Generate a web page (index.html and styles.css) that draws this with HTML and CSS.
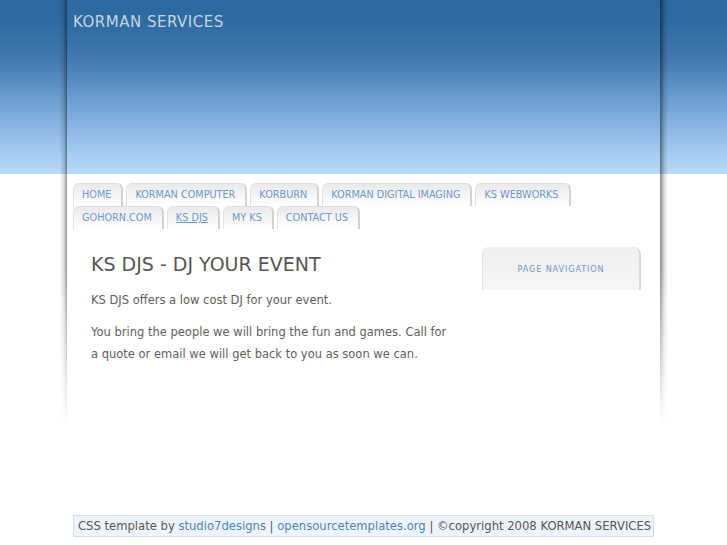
FILE: index.html
```html
<!DOCTYPE html>
<html lang="en">
<head>
<meta charset="utf-8">
<title>KORMAN SERVICES</title>
<link rel="stylesheet" href="styles.css">
</head>
<body>
<div class="page">
  <header class="masthead">
    <h1 class="site-title">KORMAN SERVICES</h1>
  </header>
  <ul class="tabs">
    <li><a href="#">HOME</a></li>
    <li><a href="#">KORMAN COMPUTER</a></li>
    <li><a href="#">KORBURN</a></li>
    <li><a href="#">KORMAN DIGITAL IMAGING</a></li>
    <li><a href="#">KS WEBWORKS</a></li>
    <li><a href="#">GOHORN.COM</a></li>
    <li><a href="#" class="current">KS DJS</a></li>
    <li><a href="#">MY KS</a></li>
    <li><a href="#">CONTACT US</a></li>
  </ul>
  <div class="body">
    <main class="content">
      <h2 class="headline">KS DJS - DJ YOUR EVENT</h2>
      <p>KS DJS offers a low cost DJ for your event.</p>
      <p>You bring the people we will bring the fun and games. Call for a quote or email we will get back to you as soon we can.</p>
    </main>
    <aside class="sidebar">
      <div class="side-head">PAGE NAVIGATION</div>
    </aside>
  </div>
</div>
<footer class="footer">CSS template by <a href="#">studio7designs</a> | <a href="#">opensourcetemplates.org</a> | ©copyright 2008 KORMAN SERVICES</footer>
</body>
</html>
```

FILE: styles.css
```css
html, body {
  margin: 0;
  padding: 0;
}
body {
  font-family: "DejaVu Sans", Verdana, sans-serif;
  color: #555;
  background: #fff linear-gradient(to bottom, #2c69a0 0px, #2e6ba2 22px, #4279b0 60px, #6d9fd2 100px, #97c1ea 140px, #b9dbfa 174px) no-repeat top left / 100% 174px;
}
.page {
  position: relative;
  width: 593px;
  margin: 0 auto;
  min-height: 425px;
}
.page::before,
.page::after {
  content: "";
  position: absolute;
  top: 0;
  bottom: 0;
  width: 8px;
  -webkit-mask-image: linear-gradient(to bottom, #000 0, #000 270px, transparent 425px);
  mask-image: linear-gradient(to bottom, #000 0, #000 270px, transparent 425px);
}
.page::before {
  left: -8px;
  background: linear-gradient(to left, rgba(0,0,0,0.45) 0, rgba(0,0,0,0.32) 1px, rgba(0,0,0,0.14) 3px, rgba(0,0,0,0.04) 6px, transparent 8px);
}
.page::after {
  right: -8px;
  background: linear-gradient(to right, rgba(0,0,0,0.45) 0, rgba(0,0,0,0.32) 2px, rgba(0,0,0,0.14) 4px, rgba(0,0,0,0.04) 7px, transparent 8px);
}
.masthead {
  height: 174px;
  box-sizing: border-box;
  padding: 13px 6px 0;
}
.site-title {
  margin: 0;
  font-weight: normal;
  font-size: 15px;
  line-height: 18px;
  letter-spacing: 0.5px;
  color: #c6d4e1;
}
.tabs {
  list-style: none;
  margin: 0;
  padding: 9px 6px 0;
  display: flex;
  flex-wrap: wrap;
  column-gap: 3px;
}
.tabs a {
  display: block;
  height: 22px;
  line-height: 22px;
  padding: 0 10px 0 8px;
  font-size: 9.7px;
  color: #6d97c6;
  text-decoration: none;
  background: linear-gradient(to bottom, #e9e9e9 0, #f4f4f4 45%, #fbfbfb 80%, #fff 100%);
  border-top: 1px solid #dedede;
  border-left: 1px solid #e2e2e2;
  border-right: 2px solid #d2d2d2;
  border-radius: 6px 6px 0 0;
}
.tabs a.current {
  text-decoration: underline;
}
.body {
  display: flex;
  padding: 18px 19px 0 24px;
  column-gap: 24px;
}
.content {
  width: 364px;
}
.headline {
  margin: 6px 0 14px;
  font-weight: normal;
  font-size: 19px;
  line-height: 23px;
  color: #555;
}
.content p {
  margin: 0 0 10.5px;
  font-size: 11.5px;
  line-height: 21.5px;
  color: #5e5e5e;
}
.sidebar {
  width: 159px;
  margin-left: auto;
}
.side-head {
  box-sizing: border-box;
  height: 43px;
  line-height: 44px;
  text-align: center;
  font-size: 8.1px;
  letter-spacing: 0.9px;
  color: #6d97c6;
  background: linear-gradient(to bottom, #f0f0f1 0, #f2f2f3 50%, #f6f7f8 100%);
  border-left: 1px solid #e3e3e3;
  border-right: 2px solid #dadada;
  border-radius: 7px 7px 0 0;
}
.footer {
  width: 581px;
  box-sizing: border-box;
  margin: 90px auto 0;
  padding: 0 4px;
  height: 22px;
  line-height: 20px;
  font-size: 11.6px;
  color: #555;
  background: #eef4fc;
  border: 1px solid #d3deea;
  white-space: nowrap;
}
.footer a {
  color: #4d84bc;
  text-decoration: none;
}
```
